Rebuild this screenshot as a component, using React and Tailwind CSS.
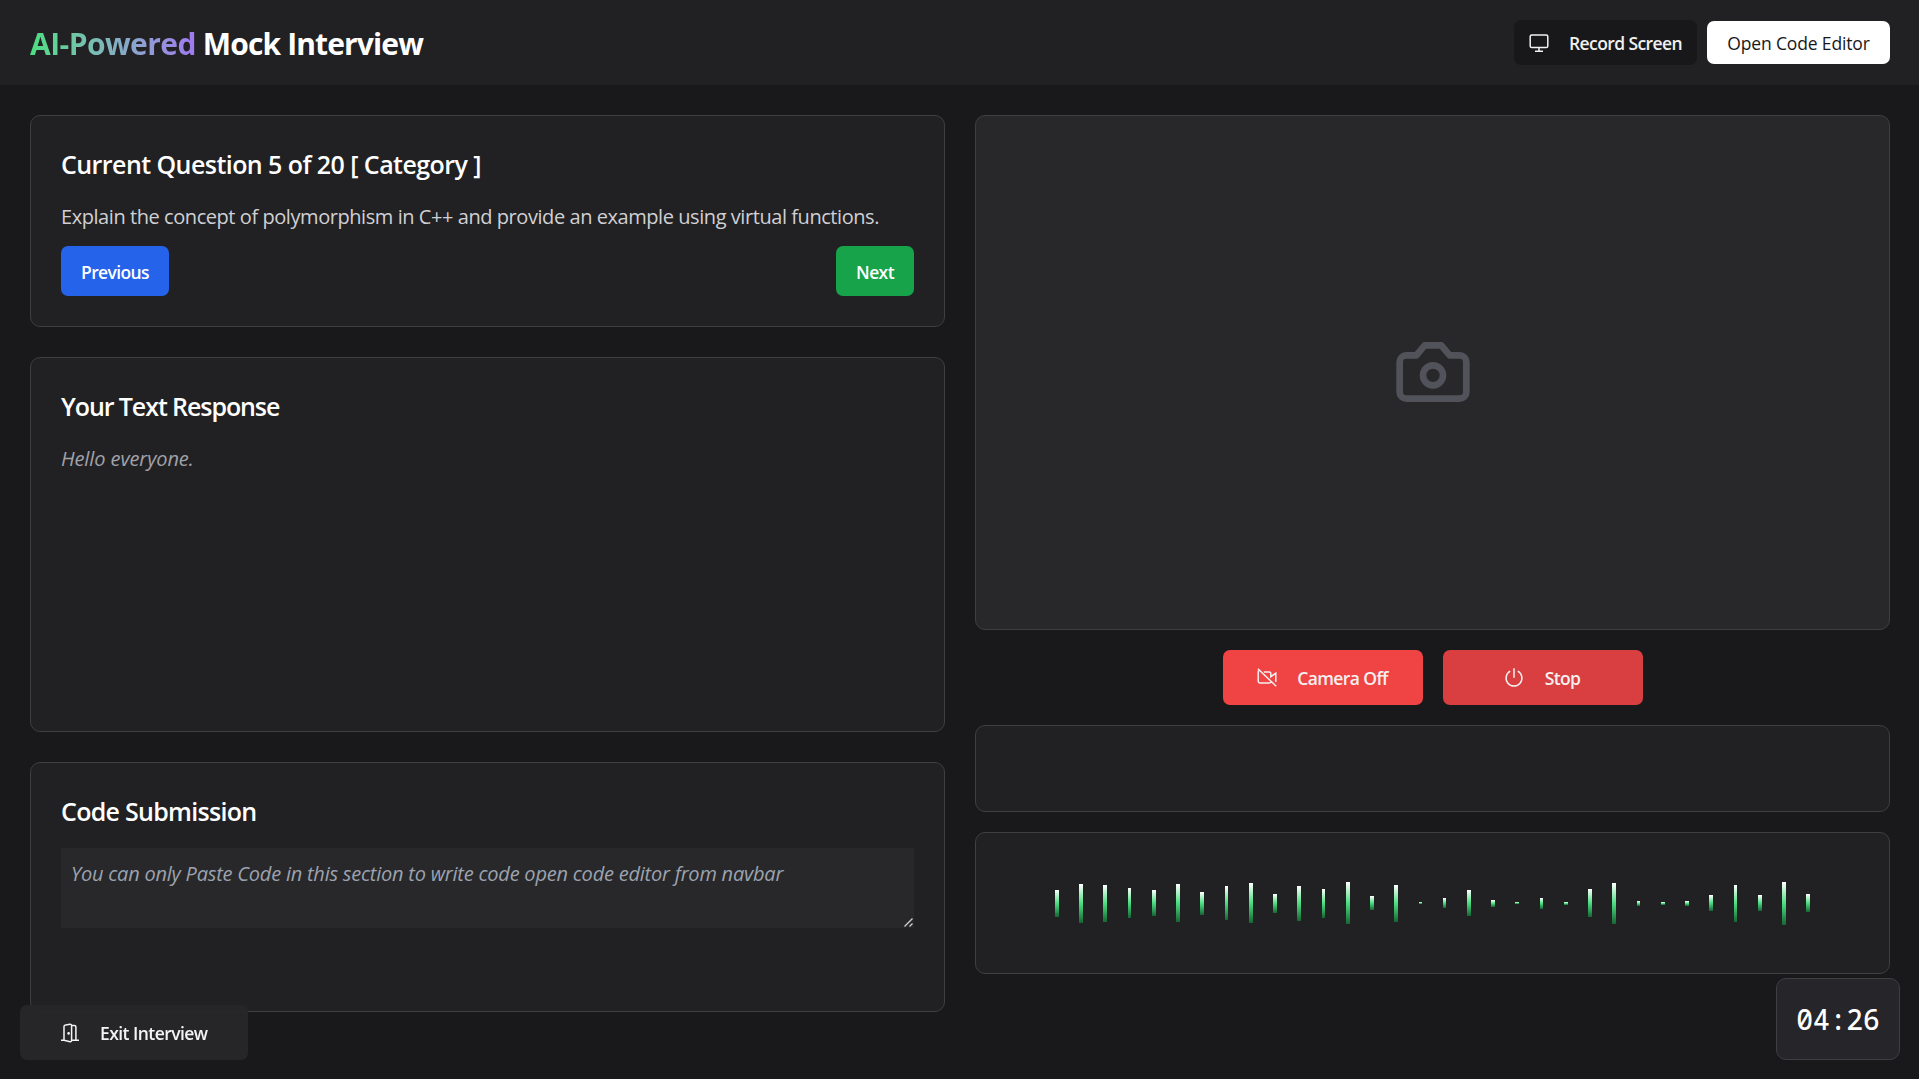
const BARS = [
  [1055, 890, 4, 27], [1079, 884, 4, 39], [1103, 885, 4, 37], [1128, 888, 3, 30], [1152, 890, 4, 26],
  [1176, 884, 4, 38], [1200, 892, 4, 23], [1225, 886, 3, 34], [1249, 883, 4, 40], [1273, 894, 4, 19],
  [1297, 886, 4, 35], [1322, 889, 3, 29], [1346, 882, 4, 42], [1370, 896, 4, 14], [1394, 885, 4, 37],
  [1419, 902, 3, 2], [1443, 898, 3, 10], [1467, 890, 4, 26], [1491, 900, 4, 7], [1515, 902, 4, 2],
  [1540, 898, 3, 11], [1564, 902, 4, 3], [1588, 889, 4, 28], [1612, 883, 4, 41], [1637, 901, 3, 5],
  [1661, 902, 4, 3], [1685, 901, 4, 5], [1709, 895, 4, 16], [1734, 885, 3, 37], [1758, 895, 4, 16],
  [1782, 882, 4, 43], [1806, 894, 4, 18],
];

const CARD = "rounded-[10px] border border-[#3f3f42] bg-[#212123]";

function Monitor() {
  return (
    <svg className="shrink-0" width="20" height="20" viewBox="0 0 20 20" fill="none" stroke="currentColor" strokeWidth="1.5">
      <rect x="1.200" y="2" width="17.600" height="12.500" rx="1.600" />
      <path d="M10 14.500v3.400M6 18.300h8" />
    </svg>
  );
}

function CameraOff() {
  return (
    <svg className="shrink-0" width="20" height="20" viewBox="0 0 20 20" fill="none" stroke="currentColor" strokeWidth="1.5">
      <path d="M.9 .7 19.200 18.200M2.200 2.300c-.7.3-1 .9-1 1.600v9.400c0 1 .7 1.700 1.700 1.700h9.300c.8 0 1.400-.4 1.700-1M6.800 4h5.300c1 0 1.700.7 1.700 1.700v3l5-3.600v9" />
    </svg>
  );
}

function Power() {
  return (
    <svg className="-ml-px mr-px shrink-0" width="20" height="20" viewBox="0 0 20 20" fill="none" stroke="currentColor" strokeWidth="1.5">
      <path d="M10 .3v9.500M6.200 3.200a7.900 7.900 0 1 0 7.600 0" />
    </svg>
  );
}

function Door() {
  return (
    <svg className="shrink-0" width="20" height="20" viewBox="0 0 20 20" fill="none" stroke="currentColor" strokeWidth="1.5">
      <path d="M1 17.300h3V3.600c0-1 .6-1.600 1.500-1.700L10 1.200c.9-.1 1.600.5 1.600 1.300v15c0 .8-.7 1.400-1.500 1.200L4 17.300M11.600 2.400h2.800c.9 0 1.500.6 1.500 1.500v13.400H19M11.600 17.300H19" />
      <circle cx="8.600" cy="10.400" r=".6" fill="currentColor" />
    </svg>
  );
}

function CameraGlyph() {
  return (
    <svg className="-mt-[2px]" width="80" height="80" viewBox="0 0 24 24" fill="none" stroke="#52525b" strokeWidth="2" strokeLinecap="round" strokeLinejoin="round">
      <path d="M14.5 4h-5L7 7H4a2 2 0 0 0-2 2v9a2 2 0 0 0 2 2h16a2 2 0 0 0 2-2V9a2 2 0 0 0-2-2h-3l-2.500-3z" />
      <circle cx="12" cy="13" r="3" />
    </svg>
  );
}

function Waveform() {
  return (
    <svg width="780" height="60" viewBox="1043 873 780 60" shapeRendering="crispEdges">
      <defs>
        <linearGradient id="bar" x1="0" y1="0" x2="0" y2="1">
          <stop offset="0" stopColor="#ffffff" />
          <stop offset=".5" stopColor="#4ade80" />
          <stop offset="1" stopColor="#166534" />
        </linearGradient>
      </defs>
      {BARS.map(([x, y, w, h]) => (
        <rect key={x} x={x} y={y} width={w} height={h} fill="url(#bar)" />
      ))}
    </svg>
  );
}

export default function App() {
  return (
    <div className="flex h-[1079px] flex-col overflow-hidden bg-[#19191b] font-['Open_Sans','Noto_Sans',sans-serif] text-white">
      <header className="flex h-[85px] shrink-0 items-center justify-between bg-[#212123] pr-[29px] pl-[30px]">
        <h1 className="pt-[3px] text-[30px] leading-10 font-bold whitespace-nowrap tracking-[-0.87px]">
          <span className="bg-linear-to-r from-[#4ade80] to-[#a078f0] bg-clip-text tracking-[-0.55px] text-transparent">AI-Powered</span> Mock Interview
        </h1>
        <div className="flex items-center gap-[10px]">
          <button className="flex h-[45px] w-[183px] items-center rounded-[7px] bg-[#18181a] pl-[15px] text-[#f0f0f0]">
            <Monitor />
            <span className="ml-5 pt-[2px] text-[17.5px] font-semibold whitespace-nowrap tracking-[-0.6px]">Record Screen</span>
          </button>
          <button className="flex h-[43px] w-[183px] items-center justify-center rounded-[7px] bg-white pt-[2px] text-[17.5px] font-medium whitespace-nowrap tracking-[-0.16px] text-[#18181a]">Open Code Editor</button>
        </div>
      </header>
      <main className="grid grid-cols-2 gap-[30px] pt-[30px] pr-[29px] pl-[30px]">
        <div className="flex flex-col gap-[30px]">
          <section className={`${CARD} h-[212px] px-[30px] pt-[31px]`}>
            <h2 className="text-[25px] leading-[35px] font-semibold whitespace-nowrap tracking-[-0.56px]">Current Question 5 of 20 [ Category ]</h2>
            <p className="mt-[20px] text-[20px] leading-[30px] whitespace-nowrap tracking-[-0.437px] text-[#d0d0d4]">Explain the concept of polymorphism in C++ and provide an example using virtual functions.</p>
            <div className="mt-[14px] flex justify-between text-[17.5px] font-semibold tracking-[-0.62px]">
              <button className="h-[50px] w-[108px] rounded-[7px] bg-[#2563eb] pt-[2px]">Previous</button>
              <button className="h-[50px] w-[78px] rounded-[7px] bg-[#16a34a] pt-[2px]">Next</button>
            </div>
          </section>
          <section className={`${CARD} h-[375px] px-[30px] pt-[31px]`}>
            <h2 className="text-[25px] leading-[35px] font-semibold tracking-[-1.08px]">Your Text Response</h2>
            <p className="mt-[20px] text-[20px] leading-[30px] tracking-[-0.1px] text-[#a1a1aa] italic">Hello everyone.</p>
          </section>
          <section className={`${CARD} h-[250px] px-[30px] pt-[31px]`}>
            <h2 className="text-[25px] leading-[35px] font-semibold tracking-[-0.71px]">Code Submission</h2>
            <div className="relative mt-[19px]">
              <textarea
                className="block h-20 w-full resize-none bg-[#28282a] px-[10px] pt-[11px] text-[20px] leading-[30px] tracking-[-0.22px] italic placeholder:text-[#9ca3af]"
                placeholder="You can only Paste Code in this section to write code open code editor from navbar"
              />
              <svg className="absolute right-[1px] bottom-[1px]" width="9" height="9" viewBox="0 0 9 9" fill="none" stroke="#d0d0d0" strokeWidth="1.300">
                <path d="M.5 8.500l8-8M5.500 8.500l3-3" />
              </svg>
            </div>
          </section>
        </div>
        <div className="flex flex-col gap-5">
          <div className="flex h-[515px] items-center justify-center rounded-[10px] border border-[#3f3f42] bg-[#28282a]">
            <CameraGlyph />
          </div>
          <div className="flex h-[55px] justify-center gap-5 text-[17.5px] font-semibold tracking-[-0.6px] text-[#f5f0f0]">
            <button className="flex w-[200px] items-center justify-center gap-5 rounded-[7px] bg-[#f04444]"><CameraOff /><span className="pt-[2px]">Camera Off</span></button>
            <button className="flex w-[200px] items-center justify-center gap-5 rounded-[7px] bg-[#d93f41]"><Power /><span className="pt-[2px]">Stop</span></button>
          </div>
          <div className={`${CARD} h-[87px]`} />
          <div className={`${CARD} flex h-[142px] items-center justify-center`}>
            <Waveform />
          </div>
        </div>
      </main>
      <button className="fixed bottom-[19px] left-5 flex h-[55px] w-[228px] items-center gap-5 rounded-[7px] bg-[#27272a]/95 pl-10 text-[17.5px] font-semibold tracking-[-0.56px] text-[#f4f4f4]">
        <Door /><span className="pt-[2px]">Exit Interview</span>
      </button>
      <div className="fixed right-[19px] bottom-[19px] flex h-[82px] w-[124px] items-center justify-center rounded-[10px] border border-[#3f3f42] bg-[#26262a] font-['Noto_Sans_Mono','DejaVu_Sans_Mono',monospace] text-[28px] font-medium tracking-[-0.1px]">04:26</div>
    </div>
  );
}
